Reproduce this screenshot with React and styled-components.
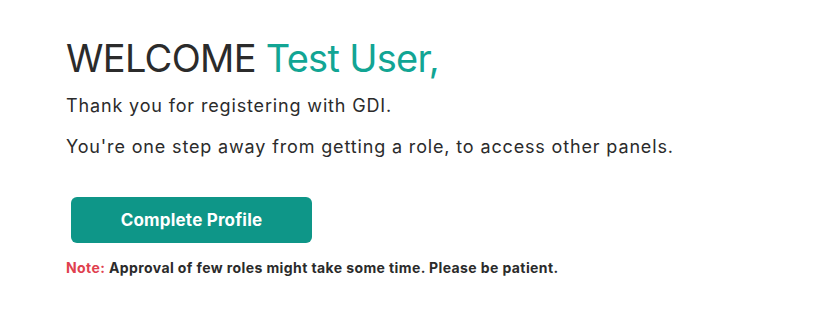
import { createGlobalStyle, styled } from 'styled-components';

const GlobalStyle = createGlobalStyle`
  body {
    margin: 0;
    background: #ffffff;
    font-family: Inter, 'Noto Sans', sans-serif;
    color: #2b2b2b;
  }
`;

export default function App() {
  return (
    <>
      <GlobalStyle />
      <Page>
        <Heading>
          WELCOME <Name>Test User,</Name>
        </Heading>
        <Lead>Thank you for registering with GDI.</Lead>
        <Lead>You're one step away from getting a role, to access other panels.</Lead>
        <ProfileButton type="button">Complete Profile</ProfileButton>
        <Note>
          <NoteLabel>Note:</NoteLabel> Approval of few roles might take some time. Please be patient.
        </Note>
      </Page>
    </>
  );
}

const Page = styled.main`
  display: flex;
  flex-direction: column;
  align-items: flex-start;
  padding: 35px 0 0 66px;
`;

const Heading = styled.h1`
  margin: 0;
  font-size: 38px;
  font-weight: 400;
  line-height: 46px;
  letter-spacing: -0.7px;
  color: #2b2b2b;
`;

const Name = styled.span`
  color: #12a594;
`;

const Lead = styled.p`
  margin: 0;
  font-size: 18px;
  line-height: 22px;
  letter-spacing: 0.85px;
  color: #2b2b2b;

  & + & {
    margin-top: 19px;
  }

  h1 + & {
    margin-top: 14px;
  }
`;

const ProfileButton = styled.button`
  margin: 39px 0 0 5px;
  width: 241px;
  height: 46px;
  border: none;
  border-radius: 6px;
  background: #0e9688;
  color: #ffffff;
  font-family: Inter, 'Noto Sans', sans-serif;
  font-size: 17px;
  font-weight: 700;
  letter-spacing: 0.2px;
  cursor: pointer;
`;

const Note = styled.p`
  margin: 16px 0 0;
  font-size: 14px;
  font-weight: 700;
  line-height: 17px;
  letter-spacing: 0.4px;
  color: #2b2b2b;
`;

const NoteLabel = styled.span`
  color: #e0404e;
`;
